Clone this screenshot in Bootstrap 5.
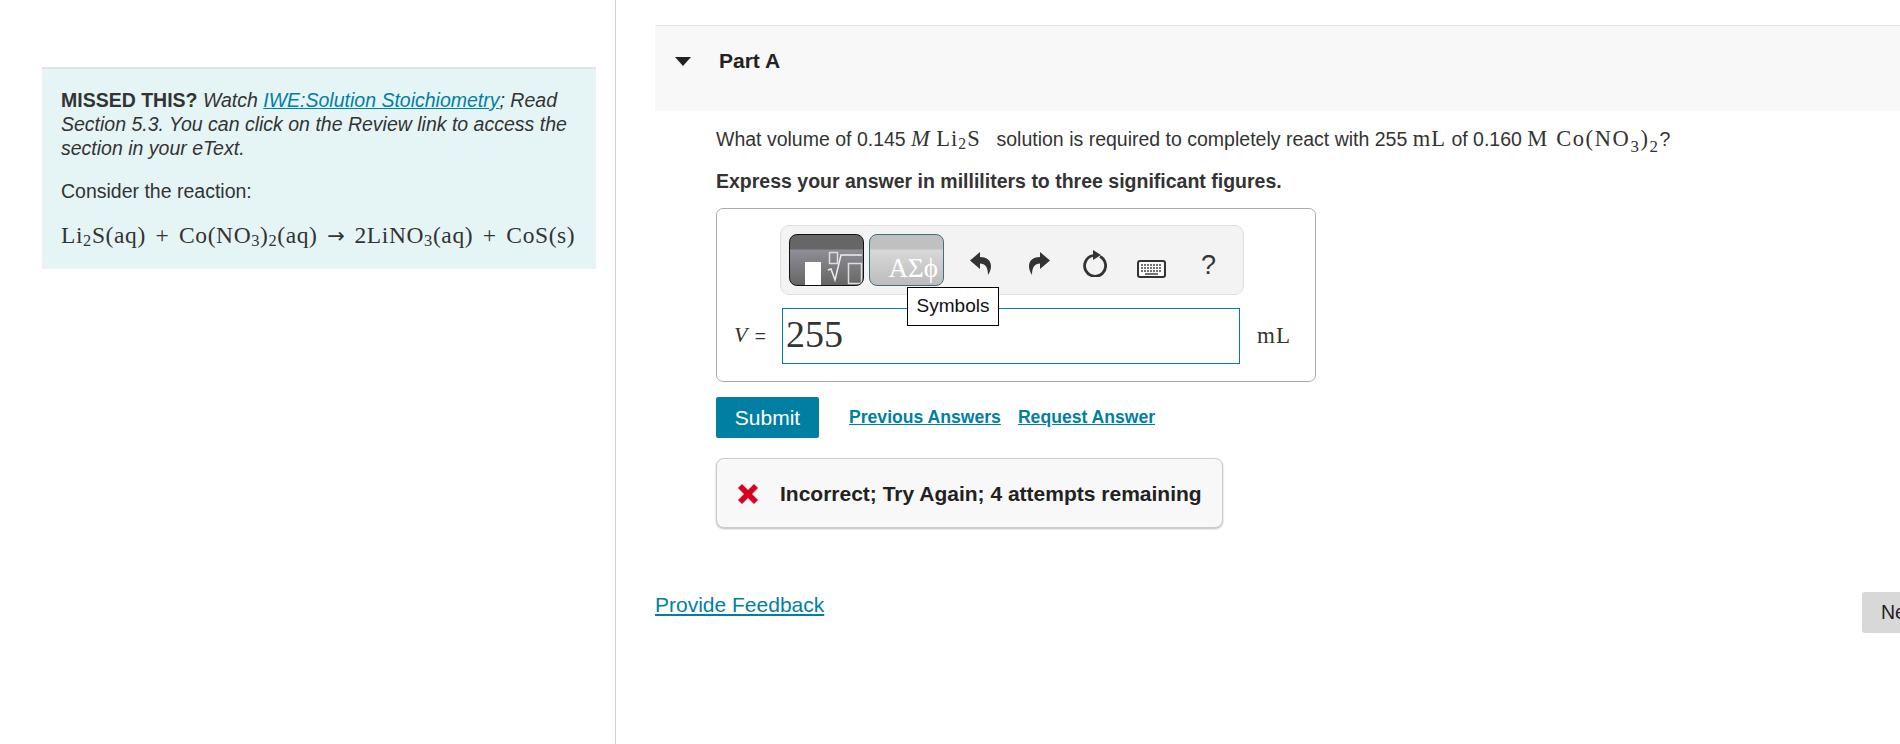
<!DOCTYPE html>
<html lang="en">
<head>
    <meta charset="UTF-8">
    <title>Part A</title>
    <link href="https://cdn.jsdelivr.net/npm/bootstrap@5.3.2/dist/css/bootstrap.min.css" rel="stylesheet">
    <style>
        html, body { height: 744px; overflow: hidden; }
        body { font-family: "Liberation Sans", Arial, sans-serif; color: #333; background: #fff; font-size: 19.5px; }
        a { color: #007fa3; }
        .math { font-family: "Liberation Serif", "Times New Roman", serif; }
        .math sub { font-size: .7em; bottom: -.2em; }

        .page-wrap { width: 1960px; height: 744px; }
        .side-col { width: 616px; flex: none; height: 744px; border-right: 1px solid #ccd3de; padding: 67px 19px 0 42px; }
        .hint-box { background: #e5f5f6; border-top: 2px solid #dce6e8; padding: 19px 10px 14px 19px; height: 202px; line-height: 24px; }
        .hint-box p { margin: 0 0 19px; }
        .hint-eq { font-size: 23.5px; line-height: 26px; white-space: nowrap; letter-spacing: .6px; word-spacing: 3.200px; }
        .eq-arrow { font-family: "DejaVu Sans", sans-serif; font-size: 21px; letter-spacing: 0; }

        .main-col { padding: 25px 0 0 39px; flex: 1; min-width: 0; }
        .part-head { background: #f8f8f8; border-top: 1px solid #e2e2e2; height: 86px; padding: 23px 0 0 20px; }
        .part-arrow { width: 0; height: 0; border-left: 8px solid transparent; border-right: 8px solid transparent; border-top: 9px solid #222; margin-top: 8px; }
        .part-title { font-size: 21px; font-weight: 700; color: #222; margin-left: 28px; line-height: 24px; }

        .part-body { padding: 14px 0 0 61px; }
        .question { line-height: 28px; margin: 0 0 15px; white-space: nowrap; }
        .question .math { font-size: 22.5px; letter-spacing: 1px; }
        .math-gap { margin-right: 5px; }
        .question .math-drop { letter-spacing: 1.600px; }
        .math-drop sub { font-size: .75em; bottom: -.35em; }
        .instruction { font-weight: 700; line-height: 26px; margin: 0 0 14px; }

        .answer-box { width: 600px; height: 174px; border: 1px solid #aaa; border-radius: 7px; padding: 16px 0 0 17px; }
        .tool-bar { width: 464px; height: 70px; margin-left: 46px; background: #f3f3f3; border: 1px solid #e0e0e0; border-radius: 9px; padding: 8px 0 0 8px; }
        .tpl-btn { width: 75px; height: 52px; border-radius: 8px; overflow: hidden; flex: none; }
        .tpl-dark { border: 1px solid #111; background: linear-gradient(#666 0, #666 14px, #8f8d96 15px, #666 100%); }
        .tpl-light { border: 1px solid #3f6f7a; margin-left: 5px; background: linear-gradient(#c0c0c0 0, #c0c0c0 14px, #d8d8d8 15px, #bcbcbc 100%); color: #fff; font-family: "Liberation Serif", serif; font-size: 27px; line-height: 1; text-align: right; padding: 20px 5px 0 0; white-space: nowrap; }
        .icon-undo { margin: 18px 0 0 26px; }
        .icon-redo { margin: 18px 0 0 38px; }
        .icon-reset { margin: 16px 0 0 32px; }
        .icon-keys { margin: 26px 0 0 30px; }
        .tool-help { font-size: 27px; color: #333; line-height: 1; margin: 18px 0 0 35px; }

        .input-row { margin-top: 13px; }
        .var-label { width: 48px; font-size: 19px; line-height: 53px; letter-spacing: 1px; }
        .var-label i { font-family: "Liberation Serif", serif; font-size: 22px; }
        .ans-field { width: 458px; height: 56px; border: 1px solid #007fa3; font-family: "Liberation Serif", serif; font-size: 38px; line-height: 42px; padding: 4px 0 0 3px; }
        .unit-label { font-family: "Liberation Serif", serif; font-size: 23px; margin-left: 17px; line-height: 56px; letter-spacing: 1px; }
        .sym-tip { top: 78px; left: 190px; width: 92px; height: 39px; background: #fff; border: 1px solid #000; color: #111; font-size: 19px; line-height: 36px; text-align: center; }

        .btn-submit { background: #007fa3; border: 0; border-radius: 2px; color: #fff; width: 103px; height: 41px; font-size: 21px; line-height: 41px; padding: 0; }
        .action-row { margin-top: 15px; }
        .action-link { font-weight: 700; font-size: 17.6px; }
        .link-prev { margin-left: 30px; }
        .link-req { margin-left: 17px; }

        .feedback-box { margin-top: 20px; width: 507px; height: 70px; background: #f8f8f8; border: 1px solid #ccc; border-radius: 8px; box-shadow: 0 1px 2px #bbb; padding: 2px 0 0 20px; }
        .feedback-text { font-weight: 700; font-size: 21px; color: #222; margin-left: 21px; white-space: nowrap; }

        .foot-row { margin-top: 61px; }
        .foot-link { font-size: 21px; margin-left: -61px; }
        .next-btn { background: #d8d8d8; border: 0; border-radius: 3px; width: 98px; height: 41px; margin-top: 3px; color: #222; font-size: 19.5px; padding: 0 0 0 19px; text-align: left; }
    </style>
</head>
<body>

<div class="page-wrap d-flex">
    <div class="side-col">
        <div class="hint-box">
            <p><b>MISSED THIS?</b> <i>Watch <a href="#">IWE:Solution Stoichiometry</a>; Read Section 5.3. You can click on the Review link to access the section in your eText.</i></p>
            <p>Consider the reaction:</p>
            <div class="hint-eq math">Li<sub>2</sub>S(aq) + Co(NO<sub>3</sub>)<sub>2</sub>(aq) <span class="eq-arrow">→</span> 2LiNO<sub>3</sub>(aq) + CoS(s)</div>
        </div>
    </div>

    <div class="main-col">
        <div class="part-head d-flex align-items-start">
            <span class="part-arrow"></span>
            <span class="part-title">Part A</span>
        </div>

        <div class="part-body">
            <p class="question">What volume of 0.145 <i class="math">M</i> <span class="math math-gap">Li<sub>2</sub>S</span>&nbsp; solution is required to completely react with 255 <span class="math">mL</span> of 0.160 <span class="math math-drop">M Co(NO<sub>3</sub>)<sub>2</sub></span>?</p>
            <p class="instruction">Express your answer in milliliters to three significant figures.</p>

            <div class="answer-box position-relative">
                <div class="tool-bar d-flex align-items-start">
                    <div class="tpl-btn tpl-dark">
                        <svg class="d-block" width="73" height="50" viewBox="0 0 73 50">
                            <rect x="15" y="27" width="16" height="23" fill="#fff"/>
                            <rect x="39.500" y="17.500" width="8" height="11" fill="none" stroke="#ddd" stroke-width="1.500"/>
                            <path d="M38 35l3 -1l4 11l6 -25h21" fill="none" stroke="#eee" stroke-width="1.500"/>
                            <rect x="58.500" y="28.500" width="13" height="20" fill="none" stroke="#ddd" stroke-width="1.500"/>
                        </svg>
                    </div>
                    <div class="tpl-btn tpl-light">ΑΣϕ</div>
                    <svg class="icon-undo flex-none" width="21" height="23" viewBox="0 0 21 23"><path d="M10 0L0 8.500L10 17V11.500C15 11.500 18 15 18 23C20 20 21 17 21 14C21 8 16 5 10 5Z" fill="#333"/></svg>
                    <svg class="icon-redo flex-none" width="21" height="23" viewBox="0 0 21 23"><path transform="matrix(-1 0 0 1 21 0)" d="M10 0L0 8.500L10 17V11.500C15 11.500 18 15 18 23C20 20 21 17 21 14C21 8 16 5 10 5Z" fill="#333"/></svg>
                    <svg class="icon-reset" width="25" height="27" viewBox="0 0 25 27"><path d="M18 6.500A10.500 10.500 0 1 1 11 5.500" fill="none" stroke="#333" stroke-width="2.800"/><path d="M11 0l8 5l-8 5z" fill="#333"/></svg>
                    <svg class="icon-keys" width="29" height="18" viewBox="0 0 29 18">
                        <rect x="1" y="1" width="27" height="16" rx="2" fill="#fafafa" stroke="#333" stroke-width="2"/>
                        <path d="M4 5h21M4 8h21M4 11h21" stroke="#444" stroke-width="1.500" stroke-dasharray="2 1"/>
                        <path d="M8 14h13" stroke="#444" stroke-width="1.500"/>
                    </svg>
                    <span class="tool-help">?</span>
                </div>

                <div class="input-row d-flex align-items-start">
                    <span class="var-label text-nowrap"><i>V</i> =</span>
                    <div class="ans-field">255</div>
                    <span class="unit-label">mL</span>
                </div>
                <div class="sym-tip position-absolute">Symbols</div>
            </div>

            <div class="action-row d-flex align-items-center">
                <button class="btn btn-submit" type="button">Submit</button>
                <a class="action-link link-prev" href="#">Previous Answers</a>
                <a class="action-link link-req" href="#">Request Answer</a>
            </div>

            <div class="feedback-box d-flex align-items-center">
                <svg width="22" height="22" viewBox="0 0 22 22"><path d="M5 1l6 6 6-6 4 4-6 6 6 6-4 4-6-6-6 6-4-4 6-6-6-6z" fill="#db0020"/></svg>
                <span class="feedback-text">Incorrect; Try Again; 4 attempts remaining</span>
            </div>

            <div class="foot-row d-flex justify-content-between align-items-start">
                <a class="foot-link" href="#">Provide Feedback</a>
                <button class="next-btn" type="button">Next</button>
            </div>
        </div>
    </div>
</div>

<script src="https://cdn.jsdelivr.net/npm/bootstrap@5.3.2/dist/js/bootstrap.bundle.min.js"></script>
</body>
</html>
